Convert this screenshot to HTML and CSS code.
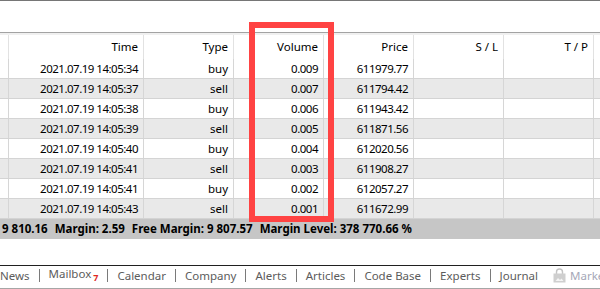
FILE: index.html
```html
<!DOCTYPE html>
<html>
<head>
<meta charset="utf-8">
<link rel="stylesheet" href="styles.css">
</head>
<body>
<div class="app">
  <div class="topline"></div>
  <div class="blank"></div>
  <div class="grid">
    <div class="band"></div>
    <div class="row head">
      <div class="c"></div><div class="c">Time</div><div class="c">Type</div><div class="c">Volume</div><div class="c">Price</div><div class="c">S / L</div><div class="c">T / P</div><div class="c last"></div>
    </div>
    <div class="row"><div class="c"></div><div class="c num">2021.07.19 14:05:34</div><div class="c">buy</div><div class="c num">0.009</div><div class="c num">611979.77</div><div class="c"></div><div class="c"></div><div class="c last"></div></div>
    <div class="row alt"><div class="c"></div><div class="c num">2021.07.19 14:05:37</div><div class="c">sell</div><div class="c num">0.007</div><div class="c num">611794.42</div><div class="c"></div><div class="c"></div><div class="c last"></div></div>
    <div class="row"><div class="c"></div><div class="c num">2021.07.19 14:05:38</div><div class="c">buy</div><div class="c num">0.006</div><div class="c num">611943.42</div><div class="c"></div><div class="c"></div><div class="c last"></div></div>
    <div class="row alt"><div class="c"></div><div class="c num">2021.07.19 14:05:39</div><div class="c">sell</div><div class="c num">0.005</div><div class="c num">611871.56</div><div class="c"></div><div class="c"></div><div class="c last"></div></div>
    <div class="row"><div class="c"></div><div class="c num">2021.07.19 14:05:40</div><div class="c">buy</div><div class="c num">0.004</div><div class="c num">612020.56</div><div class="c"></div><div class="c"></div><div class="c last"></div></div>
    <div class="row alt"><div class="c"></div><div class="c num">2021.07.19 14:05:41</div><div class="c">sell</div><div class="c num">0.003</div><div class="c num">611908.27</div><div class="c"></div><div class="c"></div><div class="c last"></div></div>
    <div class="row"><div class="c"></div><div class="c num">2021.07.19 14:05:41</div><div class="c">buy</div><div class="c num">0.002</div><div class="c num">612057.27</div><div class="c"></div><div class="c"></div><div class="c last"></div></div>
    <div class="row alt"><div class="c"></div><div class="c num">2021.07.19 14:05:43</div><div class="c">sell</div><div class="c num">0.001</div><div class="c num">611672.99</div><div class="c"></div><div class="c"></div><div class="c last"></div></div>
  </div>
  <div class="status">
    <span class="st">9 810.16</span><span class="st">Margin: 2.59</span><span class="st">Free Margin: 9 807.57</span><span class="st">Margin Level: 378 770.66 %</span>
  </div>
  <div class="spacer"></div>
  <div class="tabs">
    <span class="tab first">News</span><span class="sep"></span>
    <span class="tab">Mailbox<sub class="badge">7</sub></span><span class="sep"></span>
    <span class="tab">Calendar</span><span class="sep"></span>
    <span class="tab">Company</span><span class="sep"></span>
    <span class="tab">Alerts</span><span class="sep"></span>
    <span class="tab">Articles</span><span class="sep"></span>
    <span class="tab">Code Base</span><span class="sep"></span>
    <span class="tab">Experts</span><span class="sep"></span>
    <span class="tab">Journal</span>
    <span class="tab market">
      <svg class="lock" width="13" height="15" viewBox="0 0 13 15">
        <path d="M3.5 6V4a3 3 0 0 1 6 0v2" fill="none" stroke="#c4c4c4" stroke-width="1.4"/>
        <rect x="0.5" y="5.5" width="12" height="9" fill="#cfcfcf"/>
        <path d="M2.5 13l2.5-3 2 2 1.5-1.5 2 2.5z" fill="#f4f4f4"/>
      </svg><span class="mk">Market</span></span>
  </div>
  <div class="highlight"></div>
</div>
</body>
</html>
```
FILE: styles.css
```css
* { box-sizing: border-box; }
html, body { margin: 0; padding: 0; }
body {
  width: 600px;
  height: 289px;
  overflow: hidden;
  background: #ffffff;
  font-family: "Noto Sans", "Open Sans", sans-serif;
  font-size: 11.5px;
  color: #000;
}
.app {
  position: relative;
  width: 600px;
  height: 289px;
  display: flex;
  flex-direction: column;
}
.topline { height: 1px; background: #767676; }
.blank { height: 31px; background: #fff; }
.grid { border-top: 1px solid #a3a3a3; }
.band { height: 2px; background: #f0f0f0; }
.row {
  display: grid;
  grid-template-columns: 9px 135px 90px 90px 90px 90px 90px 1fr;
  height: 20px;
  border-bottom: 1px solid #d4d4d4;
  background: #fff;
}
.row.alt { background: #e9e9e9; }
.row.head { height: 24px; border-bottom: none; }
.c {
  border-right: 1px solid #d6d6d6;
  text-align: right;
  padding-right: 5px;
  line-height: 19px;
  white-space: nowrap;
  overflow: hidden;
}
.head .c { line-height: 23px; border-right-color: #e2e2e2; }
.c.last { border-right: none; }
.num { letter-spacing: -0.5px; }
.status {
  height: 20px;
  background: #c6c6c6;
  font-weight: bold;
  line-height: 20px;
  padding-left: 2px;
  white-space: nowrap;
  overflow: hidden;
  display: flex;
}
.st { margin-right: 7px; }
.spacer { height: 26px; }
.tabs {
  height: 24px;
  border-top: 1px solid #202020;
  border-bottom: 1px solid #a6a6a6;
  padding-bottom: 3px;
  display: flex;
  align-items: center;
  white-space: nowrap;
  overflow: hidden;
  color: #5c5c5c;
  font-size: 11.5px;
}
.tab { padding: 0 9px; line-height: 20px; flex: none; }
.tab.first { padding-left: 0; }
.sep { width: 1px; height: 13px; background: #7a7a7a; flex: none; }
.badge {
  color: #e0281e;
  font-weight: bold;
  font-size: 9px;
  margin-left: 2px;
  vertical-align: -3px;
}
.market { color: #a6a8b8; display: flex; align-items: center; padding-left: 6px; }
.lock { margin-right: 4px; flex: none; }
.highlight {
  position: absolute;
  left: 249px;
  top: 22px;
  width: 85px;
  height: 200px;
  border: 6px solid #ff4343;
}
```
